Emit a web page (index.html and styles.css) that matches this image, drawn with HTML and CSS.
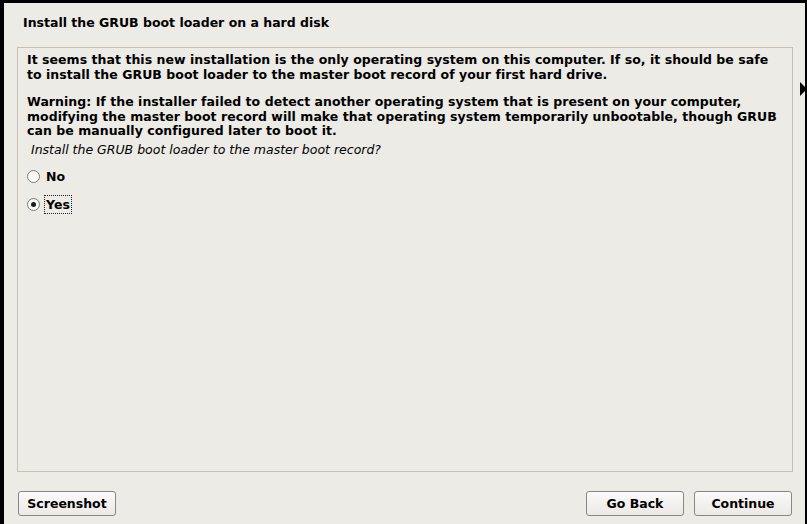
FILE: index.html
```html
<!DOCTYPE html>
<html>
<head>
<meta charset="utf-8">
<link rel="stylesheet" href="styles.css">
</head>
<body>
<div class="screen">
  <h1 class="title">Install the GRUB boot loader on a hard disk</h1>
  <div class="frame">
    <p class="desc">It seems that this new installation is the only operating system on this computer. If so, it should be safe to install the GRUB boot loader to the master boot record of your first hard drive.</p>
    <p class="desc warn">Warning: If the installer failed to detect another operating system that is present on your computer, modifying the master boot record will make that operating system temporarily unbootable, though GRUB can be manually configured later to boot it.</p>
    <p class="question">Install the GRUB boot loader to the master boot record?</p>
    <div class="options">
      <label class="option"><span class="radio"></span><span class="label">No</span></label>
      <label class="option"><span class="radio checked"></span><span class="label focus">Yes</span></label>
    </div>
  </div>
  <div class="buttons">
    <button class="btn">Screenshot</button>
    <div class="right">
      <button class="btn">Go Back</button>
      <button class="btn">Continue</button>
    </div>
  </div>
  <svg class="cursor" width="6" height="14" viewBox="0 0 6 14"><path d="M0 0 L6 6 L6 8 L0 14 Z" fill="#000"/></svg>
</div>
</body>
</html>
```
FILE: styles.css
```css
html, body {
  margin: 0;
  padding: 0;
  background: #000;
}
body {
  padding: 3px 2px 0 4px;
  width: 801px;
  height: 521px;
  overflow: hidden;
}
.screen {
  position: relative;
  background: #edebe6;
  width: 801px;
  height: 521px;
  font-family: "DejaVu Sans", sans-serif;
  color: #000;
  display: flex;
  flex-direction: column;
}
.title {
  margin: 0;
  padding: 12px 0 0 19px;
  height: 22px;
  font-size: 12.5px;
  font-weight: bold;
  line-height: 16px;
}
.frame {
  margin: 10px 0 0 13px;
  width: 774px;
  height: 423px;
  border: 1px solid #c8bfb1;
  box-sizing: content-box;
  padding: 0;
}
.desc {
  margin: 5px 0 0 9px;
  width: 760px;
  font-size: 12.5px;
  letter-spacing: 0.04px;
  font-weight: bold;
  line-height: 14.5px;
}
.desc.warn {
  margin-top: 13px;
}
.question {
  margin: 4px 0 0 13px;
  font-size: 12.5px;
  font-style: italic;
  line-height: 14px;
}
.options {
  display: flex;
  flex-direction: column;
  gap: 10px;
  margin: 11px 0 0 9px;
}
.option {
  display: flex;
  align-items: center;
  height: 18px;
  font-size: 12.5px;
  font-weight: bold;
}
.radio {
  width: 11px;
  height: 11px;
  border-radius: 50%;
  border: 1px solid #7d7a75;
  background: linear-gradient(#f4f3f1, #ffffff);
  position: relative;
  margin-right: 4px;
}
.radio.checked::after {
  content: "";
  position: absolute;
  left: 3px;
  top: 3px;
  width: 5px;
  height: 5px;
  border-radius: 50%;
  background: #1a1a1a;
}
.label {
  padding: 1px 1px;
  border: 1px dotted transparent;
}
.label.focus {
  border-color: #222;
}
.buttons {
  display: flex;
  justify-content: space-between;
  margin: 19px 0 0 14px;
  width: 774px;
}
.right {
  display: flex;
  gap: 10px;
}
.btn {
  width: 98px;
  height: 25px;
  border: 1px solid #8b867f;
  border-radius: 3px;
  background: linear-gradient(#fbfaf9, #ece9e5);
  font-family: "DejaVu Sans", sans-serif;
  font-size: 12.5px;
  font-weight: bold;
  color: #000;
  padding: 0;
}
.cursor {
  position: absolute;
  left: 796px;
  top: 79px;
}
```
